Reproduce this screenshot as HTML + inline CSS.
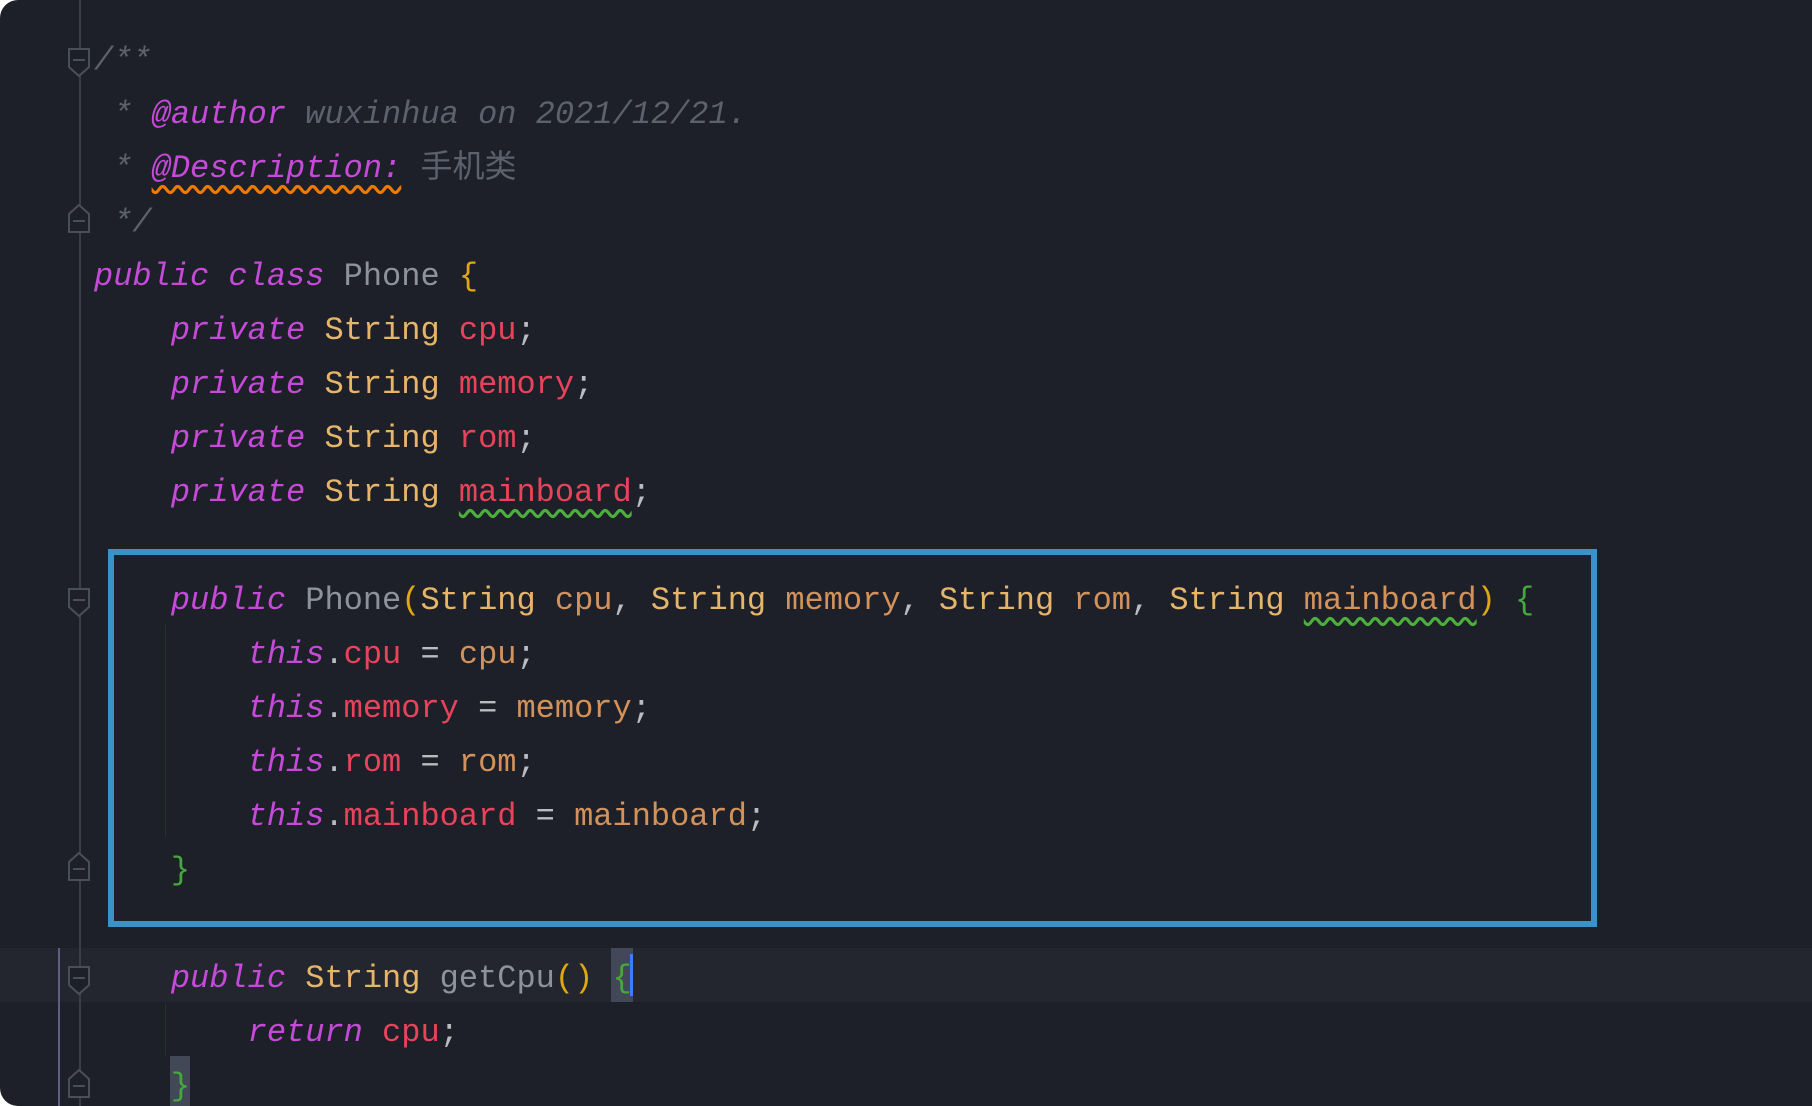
<!DOCTYPE html>
<html><head><meta charset="utf-8"><style>
html,body{margin:0;padding:0;background:#fff;}
#w{position:relative;width:1812px;height:1106px;background:#1e2029;border-radius:18px 0 0 18px;overflow:hidden;font-family:"Liberation Mono","Noto Sans CJK SC",monospace;font-size:32px;}
.l{position:absolute;left:94px;height:54px;line-height:54px;white-space:pre;color:#b9bcc2;margin-top:2px;}
.k{color:#c64ad8;font-style:italic}
.t{color:#e5b56a}
.f{color:#e8435a}
.p{color:#d2925a}
.c{color:#5c616d;font-style:italic}
.cn{color:#8e929c}
.y{color:#e0a80f}
.g{color:#45a83c}
.wo{text-decoration:underline wavy #f07a00;text-underline-offset:8px}
.wg{text-decoration:underline wavy #4caf3c;text-underline-offset:8px}
</style></head><body><div id="w">
<div style="position:absolute;left:0;top:948px;width:1812px;height:54px;background:#23262f"></div>
<div style="position:absolute;left:79px;top:0;width:2px;height:1106px;background:#3a3d46"></div>
<div style="position:absolute;left:58px;top:948px;width:2px;height:158px;background:#5a6080"></div>
<div style="position:absolute;left:165px;top:625px;width:1px;height:212px;background:#263226"></div>
<div style="position:absolute;left:165px;top:1003px;width:1px;height:52px;background:#263226"></div>
<div style="position:absolute;left:108px;top:549px;width:1477px;height:366px;border:6px solid #3a92c6"></div>
<div style="position:absolute;left:611px;top:948px;width:22px;height:54px;background:#434859"></div>
<div style="position:absolute;left:630px;top:954px;width:3px;height:42px;background:#3d7bff"></div>
<div style="position:absolute;left:170px;top:1056px;width:20px;height:54px;background:#434859"></div>
<svg style="position:absolute;left:0;top:0" width="120" height="1106">
<g fill="#1e2029" stroke="#4a4e58" stroke-width="2">
<path d="M69 49h20v18l-10 9l-10-9z"/><path d="M73 60h12"/>
<path d="M69 232v-18l10-9l10 9v18z"/><path d="M73 221h12"/>
<path d="M69 589h20v18l-10 9l-10-9z"/><path d="M73 600h12"/>
<path d="M69 880v-18l10-9l10 9v18z"/><path d="M73 869h12"/>
<path d="M69 967h20v18l-10 9l-10-9z"/><path d="M73 978h12"/>
<path d="M69 1097v-18l10-9l10 9v18z"/><path d="M73 1086h12"/>
</g></svg>
<div class="l c" style="top:32px">/**</div>
<div class="l c" style="top:86px"> * <span style="color:#c64ad8">@author</span> wuxinhua on 2021/12/21.</div>
<div class="l c" style="top:140px"> * <span style="color:#c64ad8" class="wo">@Description:</span> <span style="font-style:normal">手机类</span></div>
<div class="l c" style="top:194px"> */</div>
<div class="l" style="top:248px"><span class="k">public class</span> <span class="cn">Phone</span> <span class="y">{</span></div>
<div class="l" style="top:302px">    <span class="k">private</span> <span class="t">String</span> <span class="f">cpu</span>;</div>
<div class="l" style="top:356px">    <span class="k">private</span> <span class="t">String</span> <span class="f">memory</span>;</div>
<div class="l" style="top:410px">    <span class="k">private</span> <span class="t">String</span> <span class="f">rom</span>;</div>
<div class="l" style="top:464px">    <span class="k">private</span> <span class="t">String</span> <span class="f wg">mainboard</span>;</div>
<div class="l" style="top:572px">    <span class="k">public</span> <span class="cn">Phone</span><span class="y">(</span><span class="t">String</span> <span class="p">cpu</span>, <span class="t">String</span> <span class="p">memory</span>, <span class="t">String</span> <span class="p">rom</span>, <span class="t">String</span> <span class="p wg">mainboard</span><span class="y">)</span> <span class="g">{</span></div>
<div class="l" style="top:626px">        <span class="k">this</span>.<span class="f">cpu</span> = <span class="p">cpu</span>;</div>
<div class="l" style="top:680px">        <span class="k">this</span>.<span class="f">memory</span> = <span class="p">memory</span>;</div>
<div class="l" style="top:734px">        <span class="k">this</span>.<span class="f">rom</span> = <span class="p">rom</span>;</div>
<div class="l" style="top:788px">        <span class="k">this</span>.<span class="f">mainboard</span> = <span class="p">mainboard</span>;</div>
<div class="l" style="top:842px">    <span class="g">}</span></div>
<div class="l" style="top:950px">    <span class="k">public</span> <span class="t">String</span> <span class="cn">getCpu</span><span class="y">()</span> <span class="g">{</span></div>
<div class="l" style="top:1004px">        <span class="k">return</span> <span class="f">cpu</span>;</div>
<div class="l" style="top:1058px">    <span class="g">}</span></div>
</div></body></html>
